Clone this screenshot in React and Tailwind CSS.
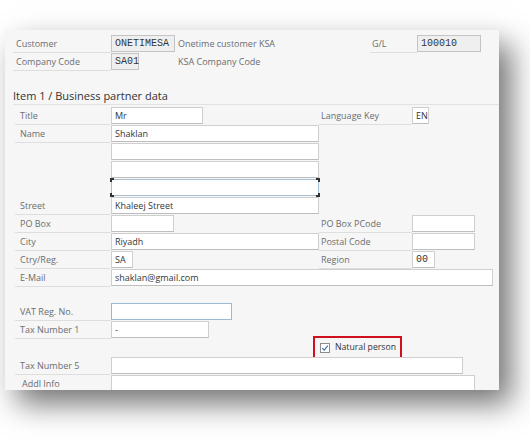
import React from 'react';

const sans = "font-['Open_Sans',sans-serif]";
const mono = "font-['Liberation_Mono',monospace]";

const Field = ({ w, value, isMono, readOnly, focus, blue }) => {
  let tone = 'bg-white border-[#cfcfcf] border-b-[#bdbdbd]';
  if (readOnly) tone = 'bg-[#efefef] border-[#c4c4c4]';
  if (blue) tone = 'bg-white border-[#9cb9d2]';
  if (focus) tone = 'bg-white border-[#a7bfd2]';
  return (
    <div
      className={`relative h-[17px] shrink-0 border ${tone} flex items-center px-[3px] text-[#32363a] whitespace-nowrap ${isMono ? `${mono} text-[10px]` : 'text-[9px]'}`}
      style={{ width: w }}
    >
      {value}
      {focus && (
        <>
          <span className="absolute -left-[2px] -top-[2px] w-[4px] h-[4px] border-l-2 border-t-2 border-[#333]" />
          <span className="absolute -right-[2px] -top-[2px] w-[4px] h-[4px] border-r-2 border-t-2 border-[#333]" />
          <span className="absolute -left-[2px] -bottom-[2px] w-[4px] h-[4px] border-l-2 border-b-2 border-[#333]" />
          <span className="absolute -right-[2px] -bottom-[2px] w-[4px] h-[4px] border-r-2 border-b-2 border-[#333]" />
        </>
      )}
    </div>
  );
};

const Label = ({ text, w = 96, pl = 5, line = true }) => (
  <div
    className={`h-[18px] shrink-0 flex items-center text-[9px] text-[#6a6d70] whitespace-nowrap ${line ? 'border-b border-[#dedede]' : ''}`}
    style={{ width: w, paddingLeft: pl }}
  >
    {text}
  </div>
);

const Row = ({ children }) => <div className="flex h-[18px] items-start">{children}</div>;

// left block: label + field area up to x=319, then optional right label/field
const GroupRow = ({ label, field, right, rightField, line = true, labelPl = 5 }) => (
  <Row>
    <Label text={label} line={line} pl={labelPl} />
    <div className="w-[208px] shrink-0 flex">{field}</div>
    {right && <Label text={right} w={93} pl={2} />}
    {rightField}
  </Row>
);

export default function App() {
  return (
    <div className={`w-[530px] h-[442px] bg-white overflow-hidden ${sans}`}>
      <div className="ml-[5px] mt-[30px] w-[494px] h-[360px] bg-[#f6f6f6] overflow-hidden shadow-[12px_14px_28px_rgba(0,0,0,0.55)]">
        {/* header */}
        <div className="pt-[5px] pl-[8px]">
          <Row>
            <Label text="Customer" w={98} pl={3} />
            <Field w={64} value="ONETIMESA" isMono readOnly />
            <div className="w-[195px] h-[18px] shrink-0 flex items-center pl-[3px] text-[9px] text-[#6a6d70]">
              Onetime customer KSA
            </div>
            <Label text="G/L" w={47} pl={2} />
            <Field w={64} value="100010" isMono readOnly />
          </Row>
          <Row>
            <Label text="Company Code" w={98} pl={3} />
            <Field w={28} value="SA01" isMono readOnly />
            <div className="w-[36px] shrink-0" />
            <div className="h-[18px] flex items-center pl-[3px] text-[9px] text-[#6a6d70]">KSA Company Code</div>
          </Row>
          <div className="mt-[18px] h-[15px] flex items-center text-[11px] text-[#333]">
            Item 1 / Business partner data
          </div>
        </div>

        {/* business partner group */}
        <div className="ml-[8px] border-t border-[#e2e2e2] pt-[2px] pl-[2px]">
          <GroupRow label="Title" field={<Field w={92} value="Mr" />} right="Language Key" rightField={<Field w={17} value="EN" />} />
          <GroupRow label="Name" field={<Field w={208} value="Shaklan" />} />
          <GroupRow label="" line={false} field={<Field w={208} />} />
          <GroupRow label="" line={false} field={<Field w={208} />} />
          <GroupRow label="" line={false} field={<Field w={208} focus />} />
          <GroupRow label="Street" field={<Field w={208} value="Khaleej Street" />} />
          <GroupRow label="PO Box" field={<Field w={63} />} right="PO Box PCode" rightField={<Field w={63} />} />
          <GroupRow label="City" field={<Field w={208} value="Riyadh" />} right="Postal Code" rightField={<Field w={63} />} />
          <GroupRow label="Ctry/Reg." field={<Field w={22} value="SA" />} right="Region" rightField={<Field w={23} value="00" isMono />} />
          <Row>
            <Label text="E-Mail" />
            <Field w={382} value="shaklan@gmail.com" />
          </Row>

          <div className="h-[16px]" />

          <Row>
            <Label text="VAT Reg. No." />
            <Field w={121} blue />
          </Row>
          <Row>
            <Label text="Tax Number 1" />
            <Field w={98} value="-" />
          </Row>
          <div className="relative h-[18px]">
            <div className="absolute left-[298px] -top-[3px] w-[89px] h-[23px] border-2 border-[#d0101f] flex items-center pl-[5px] gap-[5px] whitespace-nowrap">
              <span className="w-[10px] h-[10px] shrink-0 border border-[#8d8d8d] bg-white flex items-center justify-center">
                <svg width="8" height="8" viewBox="0 0 8 8">
                  <path d="M1.2 4.2 L3.2 6.2 L6.8 1.6" fill="none" stroke="#3a6ea5" strokeWidth="1.1" />
                </svg>
              </span>
              <span className="text-[8.7px] text-[#333]">Natural person</span>
            </div>
          </div>
          <Row>
            <Label text="Tax Number 5" />
            <Field w={352} />
          </Row>
          <Row>
            <Label text="Addl Info" pl={7} />
            <Field w={364} />
          </Row>
        </div>
      </div>
    </div>
  );
}
